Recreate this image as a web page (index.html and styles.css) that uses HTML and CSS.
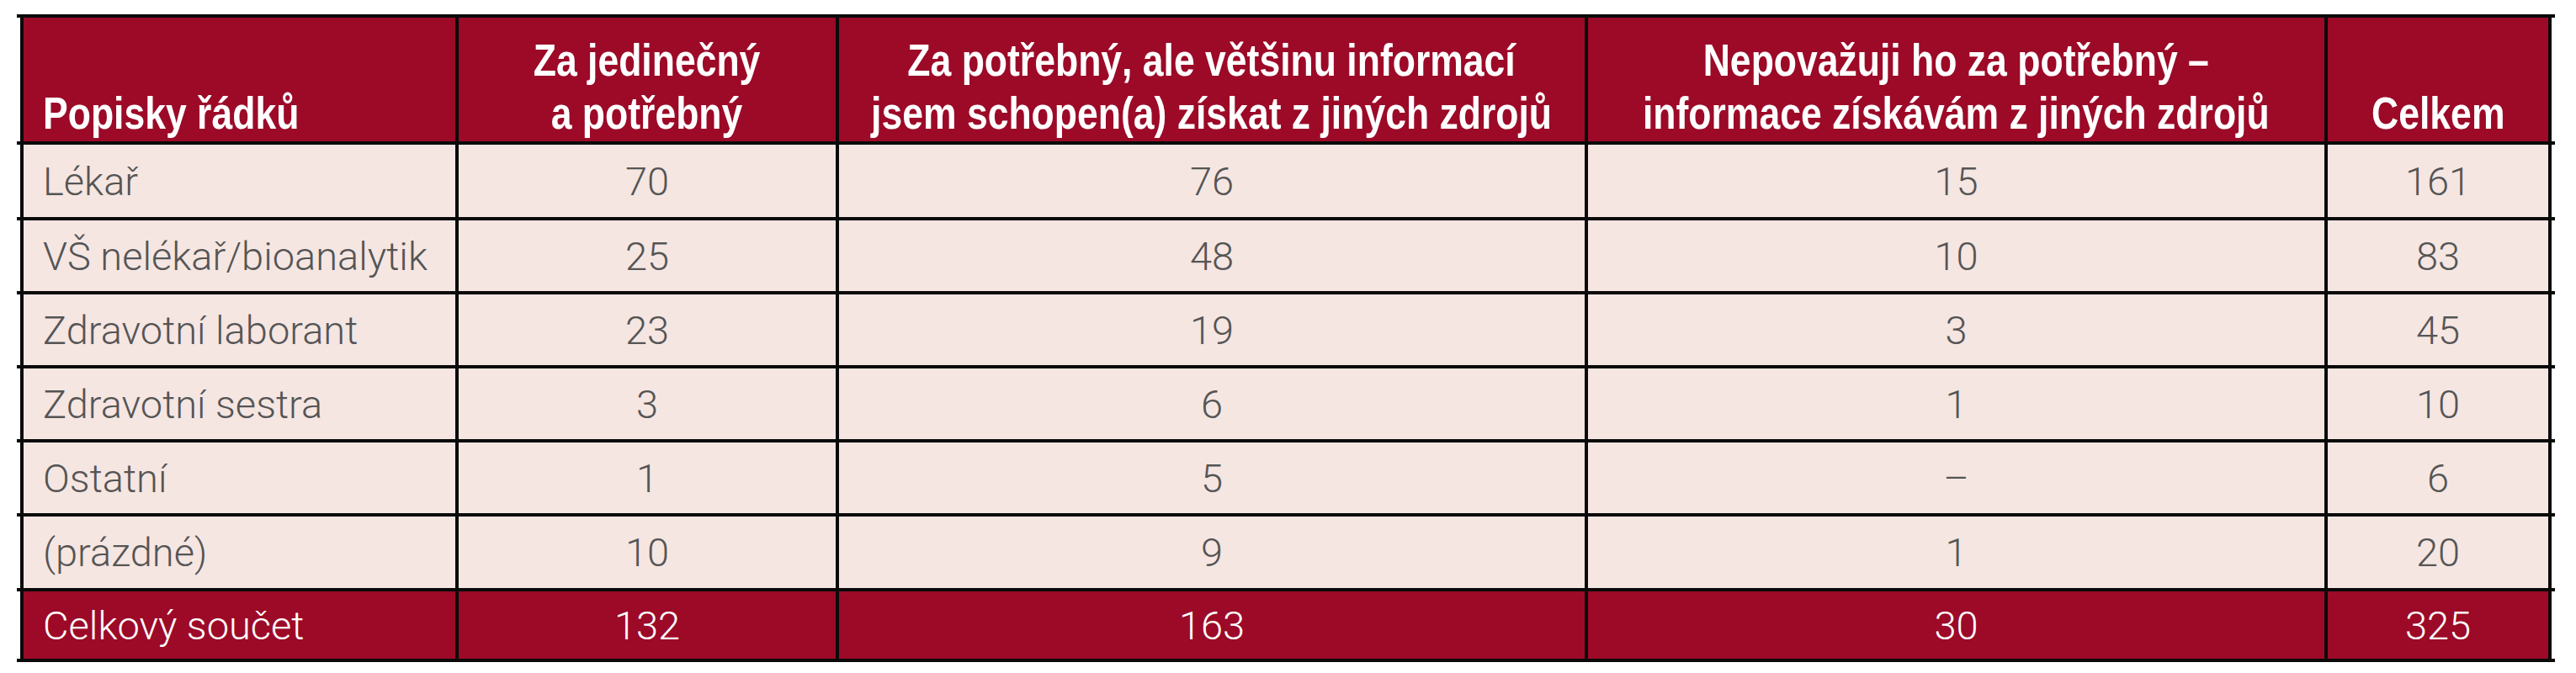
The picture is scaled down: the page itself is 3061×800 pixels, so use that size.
FILE: index.html
```html
<!DOCTYPE html>
<html lang="cs">
<head>
<meta charset="utf-8">
<title>Tabulka</title>
<link rel="stylesheet" href="styles.css">
</head>
<body>
<div class="tbl">
  <div class="row head">
    <div class="c"><span class="h">Popisky řádků</span></div>
    <div class="c"><span class="h">Za jedinečný<br>a potřebný</span></div>
    <div class="c"><span class="h">Za potřebný, ale většinu informací<br>jsem schopen(a) získat z jiných zdrojů</span></div>
    <div class="c"><span class="h">Nepovažuji ho za potřebný –<br>informace získávám z jiných zdrojů</span></div>
    <div class="c"><span class="h">Celkem</span></div>
  </div>
  <div class="row body r1">
    <div class="c">Lékař</div><div class="c">70</div><div class="c">76</div><div class="c">15</div><div class="c">161</div>
  </div>
  <div class="row body">
    <div class="c">VŠ nelékař/bioanalytik</div><div class="c">25</div><div class="c">48</div><div class="c">10</div><div class="c">83</div>
  </div>
  <div class="row body">
    <div class="c">Zdravotní laborant</div><div class="c">23</div><div class="c">19</div><div class="c">3</div><div class="c">45</div>
  </div>
  <div class="row body">
    <div class="c">Zdravotní sestra</div><div class="c">3</div><div class="c">6</div><div class="c">1</div><div class="c">10</div>
  </div>
  <div class="row body">
    <div class="c">Ostatní</div><div class="c">1</div><div class="c">5</div><div class="c">–</div><div class="c">6</div>
  </div>
  <div class="row body r6">
    <div class="c">(prázdné)</div><div class="c">10</div><div class="c">9</div><div class="c">1</div><div class="c">20</div>
  </div>
  <div class="row total">
    <div class="c">Celkový součet</div><div class="c">132</div><div class="c">163</div><div class="c">30</div><div class="c">325</div>
  </div>
</div>
</body>
</html>
```

FILE: styles.css
```css
html, body {
  margin: 0;
  padding: 0;
  background: #ffffff;
}

.tbl {
  margin: 17px 0 0 20px;
  width: 3016px;
  border-top: 4px solid #0a0a0a;
}

.row {
  display: grid;
  grid-template-columns: 521px 452px 890px 879px 266px;
  padding: 0 4px;
  border-bottom: 4px solid #0a0a0a;
  box-sizing: border-box;
  height: 88px;
}

.c {
  box-sizing: border-box;
  border-right: 4px solid #0a0a0a;
  display: flex;
  align-items: center;
  justify-content: center;
  text-align: center;
  white-space: nowrap;
}

.c:first-child {
  border-left: 4px solid #0a0a0a;
  justify-content: flex-start;
  text-align: left;
  padding-left: 23px;
}

.head {
  height: 151px;
}

.head .c {
  background: #9c0a28;
  color: #ffffff;
  font-family: "Liberation Sans", Arial, sans-serif;
  font-weight: 700;
  font-size: 53px;
  line-height: 63px;
  align-items: flex-end;
  padding-bottom: 2px;
}

.h {
  display: inline-block;
  transform: scaleX(0.84);
  transform-origin: 50% 50%;
}

.head .c:first-child .h {
  transform-origin: 0 50%;
}

.body .c,
.total .c {
  font-family: Roboto, "Liberation Sans", sans-serif;
  font-weight: 300;
  font-size: 47px;
}

.body .c {
  background: #f5e6e2;
  color: #555555;
}

.r1 {
  height: 90px;
}

.r6 {
  height: 89px;
}

.total {
  height: 84px;
}

.total .c {
  background: #9c0a28;
  color: #ffffff;
}
```
